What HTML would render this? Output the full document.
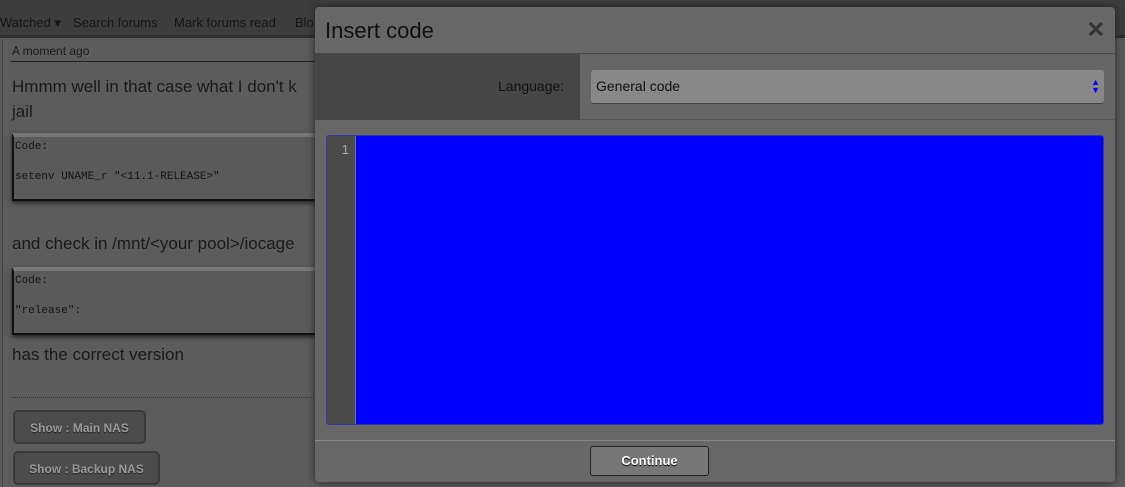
<!DOCTYPE html>
<html><head><style>
*{box-sizing:border-box;margin:0;padding:0}
html,body{width:1125px;height:487px;overflow:hidden}
body{background:#5a5a5a;font-family:"Liberation Sans",sans-serif;position:relative}
.nav{position:absolute;left:0;top:0;width:1125px;height:38px;background:#3d3d3d;border-bottom:3px solid #2e2e2e}
.nav span{position:absolute;top:15px;font-size:13px;color:#151515}
.post{position:absolute;left:2px;top:40px;width:1120px;height:447px;background:#5c5c5c;border-left:1px solid #444}
.t{position:absolute;color:#1a1a1a;white-space:nowrap}
.code{position:absolute;left:9px;width:600px;background:#5a5a5a;border:2px solid #111;border-top:4px solid #777;box-shadow:0 2px 4px #222;font-family:"Liberation Mono",monospace;font-size:11px;color:#151515;padding:3px 1px;line-height:15px}
.btn{position:absolute;left:10px;height:34px;border:2px solid #3a3a3a;border-radius:5px;background:#4c4c4c;color:#9a9a9a;font-weight:bold;font-size:12px;padding:9px 0;text-align:center;white-space:nowrap;text-shadow:0 1px 1px #222}
.dlg{position:absolute;left:315px;top:7px;width:800px;height:475px;background:#676767;border-radius:4px;box-shadow:0 0 8px #222}
</style></head><body>
<div class="nav">
<span style="left:0">Watched ▾</span><span style="left:73px">Search forums</span><span style="left:174px">Mark forums read</span><span style="left:295px">Blo</span>
</div>
<div class="post">
<div class="t" style="left:9px;top:4px;font-size:12px">A moment ago</div>
<div style="position:absolute;left:8px;top:21px;width:310px;border-top:1px solid #222"></div>
<div class="t" style="left:9px;top:34px;font-size:17px;line-height:25px">Hmmm well in that case what I don't k<br>jail</div>
<div class="code" style="top:93px;height:68px">Code:<br><br>setenv UNAME_r "&lt;11.1-RELEASE&gt;"</div>
<div class="t" style="left:9px;top:194px;font-size:17px">and check in /mnt/&lt;your pool&gt;/iocage</div>
<div class="code" style="top:227px;height:68px">Code:<br><br>"release":</div>
<div class="t" style="left:9px;top:305px;font-size:17px">has the correct version</div>
<div style="position:absolute;left:9px;top:357px;width:310px;border-top:1px dotted #333"></div>
<div class="btn" style="top:370px;width:133px">Show : Main NAS</div>
<div class="btn" style="top:411px;width:147px">Show : Backup NAS</div>
</div>
<div class="dlg">
<div style="position:absolute;left:10px;top:11px;font-size:22px;color:#111">Insert code</div>
<div style="position:absolute;right:10px;top:10px;font-size:22px;color:#333;font-weight:bold">✕</div>
<div style="position:absolute;left:0;top:46px;width:800px;height:67px;background:#666;border-top:1px solid #4a4a4a;border-bottom:1px solid #555"></div>
<div style="position:absolute;left:0;top:46px;width:265px;height:67px;background:#464646"></div>
<div style="position:absolute;left:183px;top:71px;font-size:14px;color:#111">Language:</div>
<div style="position:absolute;left:276px;top:63px;width:513px;height:34px;background:#888;border-radius:3px;border-bottom:1px solid #444;font-size:14px;color:#111;padding:8px 5px">General code<span style="position:absolute;right:4px;top:8px;color:#00f;font-size:9px;line-height:8px">▲<br>▼</span></div>
<div style="position:absolute;left:11px;top:128px;width:778px;height:290px;background:#00f;border-radius:3px;border:1px solid #3333aa"></div>
<div style="position:absolute;left:12px;top:129px;width:29px;height:288px;background:#4a4a4a;border-right:1px solid #777;color:#aaa;font-size:13px;text-align:right;padding:6px 6px 0 0">1</div>
<div style="position:absolute;left:0;top:433px;width:800px;border-top:1px solid #888"></div>
<div style="position:absolute;left:275px;top:439px;width:119px;height:30px;background:#777;border:1px solid #222;border-radius:3px;color:#fff;font-weight:bold;font-size:13px;text-align:center;line-height:28px;text-shadow:0 1px 1px #000">Continue</div>
</div>
</body></html>
